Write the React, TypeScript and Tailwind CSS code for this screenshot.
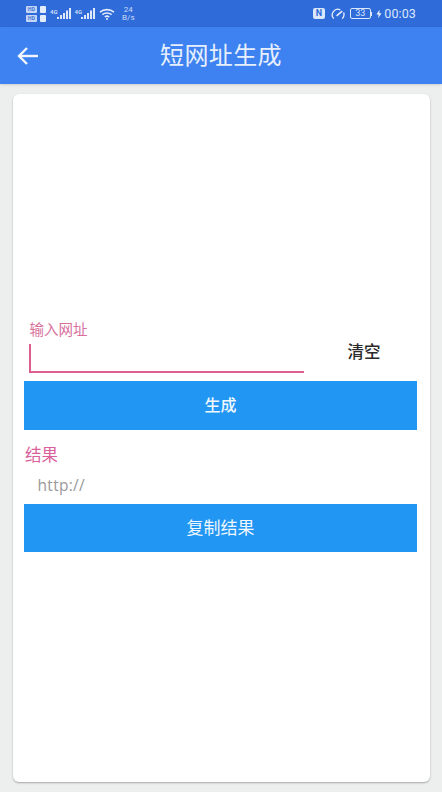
const cjk = 'font-["Roboto","Noto_Sans_CJK_SC",sans-serif]';

function Signal() {
    return (
        <div className="flex items-end">
            <span className="mb-[5px] text-[6px] font-bold leading-[7px] text-[#c9dbf8]">4G</span>
            <svg width="14" height="12" viewBox="0 0 14 12" fill="#dfe9fb" className="-ml-[1px]">
                <rect x="0" y="9" width="2" height="2" />
                <rect x="3" y="7" width="2" height="4" />
                <rect x="6" y="5" width="2" height="6" />
                <rect x="9" y="2.500" width="2" height="8.500" />
                <rect x="12" y="0" width="2" height="11" />
            </svg>
        </div>
    );
}

function SimBadge() {
    return (
        <div className="flex items-center gap-[3px]">
            <div className="flex h-[7px] w-[11px] items-center justify-center rounded-[1px] bg-[#c3d6f7] text-[5px] font-bold leading-none text-[#3a6fd0]">
                HD
            </div>
            <div className="h-[7px] w-[6px] rounded-[1px] bg-[#e4edfc]" />
        </div>
    );
}

function StatusBar() {
    return (
        <div className="flex h-[27px] items-center justify-between bg-[#2f6bd9] pl-[26px] pr-[26px] text-[#dbe7fb]">
            <div className="flex items-center gap-[4px]">
                <div className="flex flex-col gap-[2px]">
                    <SimBadge />
                    <SimBadge />
                </div>
                <Signal />
                <Signal />
                <svg width="16" height="12" viewBox="0 0 16 12" fill="none" stroke="#e6eefc" strokeWidth="1.600">
                    <path d="M1 4.200C5 .8 11 .8 15 4.200" />
                    <path d="M3.400 6.600C6 4.500 10 4.500 12.600 6.600" />
                    <path d="M5.800 9C7 8 9 8 10.200 9" />
                    <circle cx="8" cy="11" r="1" fill="#e6eefc" stroke="none" />
                </svg>
                <div className="ml-[3px] flex flex-col items-center text-[8px] leading-[8px] text-[#c9dbf8]">
                    <span>24</span>
                    <span>B/s</span>
                </div>
            </div>
            <div className="flex items-center">
                <div className="flex h-[11px] w-[12px] items-center justify-center rounded-[2px] bg-[#dbe7fb] text-[9px] font-bold leading-none text-[#2f6bd9]">
                    N
                </div>
                <svg width="14" height="12" viewBox="0 0 15 12" fill="none" stroke="#e6eefc" strokeWidth="1.400" className="ml-[6px]">
                    <path d="M3 11A6 6 0 0 1 10 1.500" />
                    <path d="M13.500 4.500A6 6 0 0 1 12 11" />
                    <path d="M6 8L12 3" strokeWidth="1.700" />
                </svg>
                <div className="ml-[5px] flex h-[11px] w-[21px] items-center justify-center rounded-[2px] border border-[#dbe7fb] text-[9px] leading-none">
                    33
                </div>
                <div className="h-[4px] w-[1.500px] bg-[#dbe7fb]" />
                <svg width="6" height="10" viewBox="0 0 7 10" fill="#e6eefc" className="ml-[4px]">
                    <path d="M4 0L.5 5.700H3L2.500 10L6.500 4H4z" />
                </svg>
                <span className="ml-[2px] pt-[1px] text-[12.500px] leading-none tracking-[.1px]">00:03</span>
            </div>
        </div>
    );
}

export default function App() {
    return (
        <div className={`flex h-[792px] w-[442px] flex-col overflow-hidden bg-[#edefee] ${cjk}`}>
            <StatusBar />
            <div className="flex h-[57px] items-center bg-[#3d82f0] pl-[17px] shadow-sm">
                <svg width="22" height="18" viewBox="0 0 22 18" fill="none" stroke="#f2f6fe" strokeWidth="2.400">
                    <path d="M21 9H2" />
                    <path d="M10 1L2 9L10 17" />
                </svg>
                <div className="flex-1 pr-[39px] pt-[1px] text-center text-[24px] tracking-[.4px] text-[#e6effd]">短网址生成</div>
            </div>
            <div className="mb-[10px] ml-[13px] mr-[12px] mt-[10px] flex flex-1 flex-col rounded-[6px] bg-white pl-[11px] pr-[13px] pt-[228px] shadow-[0_1px_2px_rgba(0,0,0,0.3)]">
                <div className="pl-[5.500px] text-[14.500px] leading-[18px] text-[#d8709c]">输入网址</div>
                <div className="mt-[4px] flex items-start">
                    <div className="ml-[5px] h-[29px] w-[275px] border-b-2 border-l-2 border-[#dc5f8f]" />
                    <button className="ml-[43.500px] text-[16.500px] font-medium leading-[18px] text-[#2a2a2a]">清空</button>
                </div>
                <button className="mt-[8px] h-[49px] w-[393px] bg-[#2196f3] pt-[1px] text-[16px] font-medium text-[#f0f8fe]">生成</button>
                <div className="mt-[17px] pl-[1px] text-[16.500px] leading-[18px] text-[#d9609a]">结果</div>
                <div className="mt-[11px] pl-[13.500px] font-['Open_Sans',sans-serif] text-[15.500px] leading-[18px] tracking-[.3px] text-[#9a9a9a]">http://</div>
                <button className="mt-[10px] h-[48px] w-[393px] bg-[#2196f3] pt-[1px] text-[17px] text-[#f0f8fe]">复制结果</button>
            </div>
        </div>
    );
}
